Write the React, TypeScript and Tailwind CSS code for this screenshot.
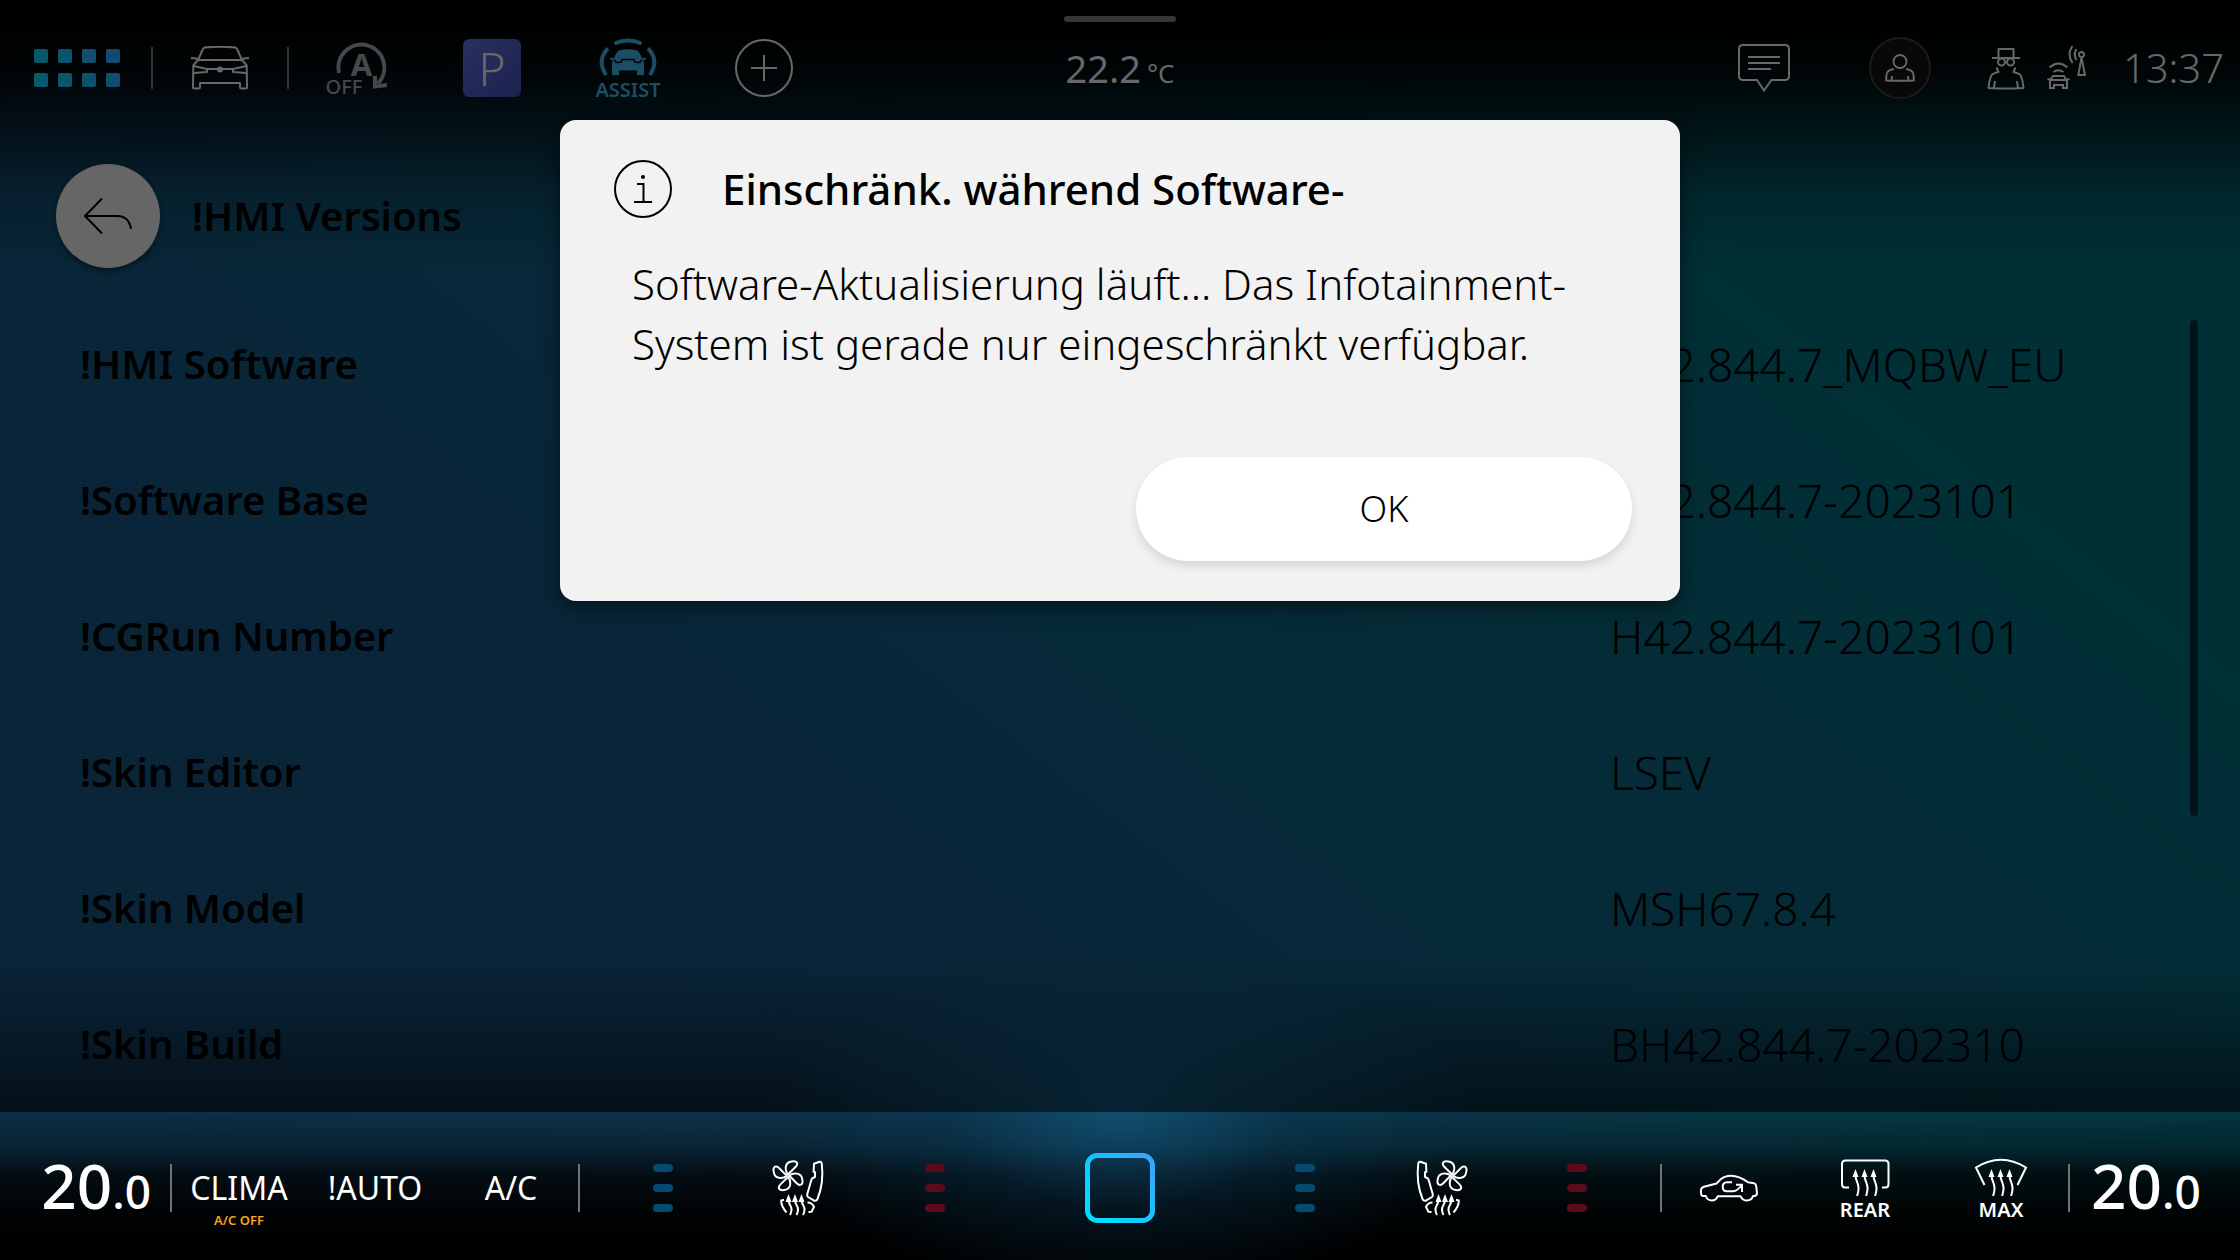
import type { ReactNode } from 'react';

const versions: [string, string][] = [
  ['!HMI Software', 'H42.844.7_MQBW_EU'],
  ['!Software Base', 'H42.844.7-2023101'],
  ['!CGRun Number', 'H42.844.7-2023101'],
  ['!Skin Editor', 'LSEV'],
  ['!Skin Model', 'MSH67.8.4'],
  ['!Skin Build', 'BH42.844.7-202310'],
];

const cell = 'flex w-[136px] items-center justify-center';
const line = { fill: 'none', stroke: 'currentColor', strokeWidth: 2 } as const;

function AppsIcon() {
  return (
    <svg width="86" height="38" viewBox="0 0 86 38" aria-hidden="true">
      <defs>
        <linearGradient id="apps" x1="0" y1="38" x2="86" y2="0" gradientUnits="userSpaceOnUse">
          <stop offset="0" stopColor="#035c6b" />
          <stop offset="1" stopColor="#15486f" />
        </linearGradient>
      </defs>
      {[0, 24, 48, 72].map((x) =>
        [0, 24].map((y) => <rect key={`${x}-${y}`} x={x} y={y} width="14" height="14" rx="2" fill="url(#apps)" />),
      )}
    </svg>
  );
}

function CarFrontIcon() {
  return (
    <svg width="60" height="44" viewBox="0 0 60 44" aria-hidden="true" {...line} strokeLinejoin="round">
      <path d="M8 14 L13 3 Q13.700 1.600 15 1.400 Q30 0 45 1.400 Q46.300 1.600 47 3 L52 14 H8 L6.500 12.500 L1 12 M52 14 L53.500 12.500 L59 12" />
      <path d="M8 14 L3.300 19.500 L3 41 Q3 42.500 4.500 42.500 H8.500 Q10 42.500 10 41 V37 H50 V41 Q50 42.500 51.500 42.500 H55.500 Q57 42.500 57 41 L56.700 19.500 L52 14" />
      <path d="M3.500 20 L17 23 V26 L4 27 M56.500 20 L43 23 V26 L56 27 M17 23 H43" />
      <circle cx="30" cy="23.500" r="3" fill="currentColor" stroke="none" />
    </svg>
  );
}

function AutoStopIcon() {
  return (
    <svg width="64" height="68" viewBox="0 -6 64 68" aria-hidden="true" fill="none">
      <path d="M15 33 A23 23 0 1 1 54 43.500" stroke="currentColor" strokeWidth="4" />
      <path d="M51 36 V46.500 L63 45" stroke="currentColor" strokeWidth="4" />
      <text x="37.500" y="36" fontSize="31" fontWeight="700" fill="currentColor" textAnchor="middle">A</text>
      <text x="20" y="54" fontSize="20" fontWeight="500" fill="currentColor" textAnchor="middle">OFF</text>
    </svg>
  );
}

function AssistIcon() {
  return (
    <svg width="68" height="74" viewBox="-2 -6 68 74" aria-hidden="true" fill="none">
      <g stroke="currentColor" strokeWidth="4">
        <path d="M18.500 6.500 Q32 0.500 45.500 6.500" />
        <path d="M12 11.500 Q0.500 23 10 38" />
        <path d="M52 11.500 Q63.500 23 54 38" />
      </g>
      <path
        fill="currentColor"
        d="M24 13 Q32 11.500 40 13 Q42 13.300 43 15 L46 21 L50 20.800 V22.500 L47 23 L48 25.500 V38 H41 V33.500 H23 V38 H16 V25.500 L17 23 L14 22.500 V20.800 L18 21 L21 15 Q22 13.300 24 13 Z"
      />
      <path d="M18.500 22.500 L20 25.500 L25 25 L26 22.500 H38 L39 25 L44 25.500 L45.500 22.500" stroke="#010405" strokeWidth="1.500" />
      <text x="32" y="60" fontSize="20" fontWeight="600" fill="currentColor" textAnchor="middle">ASSIST</text>
    </svg>
  );
}

function PlusIcon() {
  return (
    <svg width="58" height="58" viewBox="0 0 58 58" aria-hidden="true" {...line}>
      <circle cx="29" cy="29" r="28" />
      <path d="M29 16 V42 M16 29 H42" />
    </svg>
  );
}

function MessageIcon() {
  return (
    <svg width="52" height="48" viewBox="1 0 52 48" aria-hidden="true" {...line}>
      <path d="M5 1 H48 Q52 1 52 5 V32 Q52 36 48 36 H34.500 L27 46.500 L20 36 H6 Q2 36 2 32 V5 Q2 1 6 1 Z" />
      <path d="M11 13 H43 M11 19 H43 M11 25 H34" />
    </svg>
  );
}

function UserIcon() {
  return (
    <svg width="30" height="28" viewBox="0 0 30 28" aria-hidden="true" {...line} strokeLinejoin="round">
      <circle cx="15" cy="7.500" r="6.500" />
      <path d="M9 15 Q3 16 2 19 Q1.200 21 1.200 26.500 Q15 27.200 28.800 26.500 Q28.800 21 28 19 Q27 16 21 15 M7 22 L6.500 26.500 M23 22 L23.500 26.500" />
    </svg>
  );
}

function PrivacyIcon() {
  return (
    <svg width="38" height="44" viewBox="0 0 38 44" aria-hidden="true" {...line} strokeLinejoin="round">
      <path d="M5 12 H33 M11.500 12 V3 H26.500 V12" />
      <circle cx="14.500" cy="16" r="3.500" />
      <circle cx="23.500" cy="16" r="3.500" />
      <path d="M9.500 21.500 L11.500 26 Q5 27.500 4 30 Q2 35 1.500 42 Q19 43 36.500 42 Q36 35 34 30 Q33 27.500 26.500 26 L28.500 21.500 M8 35 L7 42 M30 35 L31 42" />
    </svg>
  );
}

function AntennaCarIcon() {
  return (
    <svg width="40" height="46" viewBox="0 0 40 46" aria-hidden="true" {...line}>
      <path d="M3 43 V36 L6 31 H17 L20 36 V43 H16 V40 H7 V43 Z M4 35 H19 M0.500 34 L4 35 M22.500 34 L19 35" />
      <path d="M6.500 27 Q11.500 23.500 16.500 27 M2.500 22.500 Q11.500 14.500 20.500 22.500" />
      <circle cx="34.500" cy="9.500" r="2.500" />
      <path d="M34.500 12.500 L31.300 30 H38 Z M29.500 4 Q26 9.500 29.500 15 M25.500 1 Q19.500 9 25.500 18" />
    </svg>
  );
}

function BackIcon() {
  return (
    <svg width="50" height="38" viewBox="0 0 50 38" aria-hidden="true" {...line}>
      <path d="M19 1.500 L2 19 L19 36.500 M2 19 H34 Q46 19 48 32" />
    </svg>
  );
}

function InfoIcon() {
  return (
    <svg width="58" height="58" viewBox="0 0 58 58" aria-hidden="true" {...line}>
      <circle cx="29" cy="29" r="28" />
      <path d="M23 24 H29.500 V42 M20 42 H38" />
      <circle cx="29" cy="17" r="2" fill="currentColor" stroke="none" />
    </svg>
  );
}

function HeatArrow({ x, top, bottom }: { x: number; top: number; bottom: number }) {
  const h = (bottom - top - 6) / 3;
  return (
    <>
      <path
        d={`M${x} ${top + 5} C${x} ${top + 5 + h} ${x + 3.5} ${top + 6 + h} ${x + 3} ${top + 6 + 2 * h} Q${x + 2.5} ${bottom - 2} ${x + 1.5} ${bottom}`}
      />
      <path d={`M${x} ${top - 1} L${x + 3} ${top + 7} H${x - 3} Z`} fill="currentColor" stroke="none" />
    </>
  );
}

function SeatIcon({ mirrored = false }: { mirrored?: boolean }) {
  return (
    <svg width="56" height="58" viewBox="0 0 56 58" aria-hidden="true" {...line} strokeLinejoin="round">
      <g transform={mirrored ? 'matrix(-1 0 0 1 56 0)' : undefined}>
        {[0, 90, 180, 270].map((a) => (
          <path
            key={a}
            transform={`rotate(${a} 17 16.700)`}
            d="M16.800 15.500 C14 12 13.500 5 18.500 3 C22 1.800 25 2 26 3.800 C26.800 5.500 26 6.500 24.500 8 Z"
          />
        ))}
        <path d="M42.600 12.700 L43 4.700 L48.500 2.700 Q50.500 2.500 50.800 5 Q53 24 46.500 40 Q45.500 42.200 43.500 41.800 L37 38 Q35.800 37 36.300 35 L40.500 20.500 Q41 19 44 18 V13.200 Z" />
        <path d="M13 40.800 L10.200 41.500 Q10 47 15.500 53.500 M36.500 43.500 Q41 43.500 43 47.700 L40.500 52.700 L37.500 53" />
        <HeatArrow x={17.5} top={36} bottom={56} />
        <HeatArrow x={24} top={36} bottom={56} />
        <HeatArrow x={30.5} top={36} bottom={56} />
      </g>
    </svg>
  );
}

function HomeIcon() {
  return (
    <svg width="70" height="70" viewBox="0 0 70 70" aria-hidden="true" fill="none">
      <defs>
        <linearGradient id="home" x1="0" y1="70" x2="70" y2="0" gradientUnits="userSpaceOnUse">
          <stop offset="0.200" stopColor="#00dcff" />
          <stop offset="0.850" stopColor="#32a8ff" />
        </linearGradient>
      </defs>
      <rect x="2.500" y="2.500" width="65" height="65" rx="10" stroke="url(#home)" strokeWidth="5" />
    </svg>
  );
}

function RecirculationIcon() {
  return (
    <svg width="60" height="58" viewBox="0 0 60 58" aria-hidden="true" {...line} strokeLinejoin="round">
      <path d="M6.800 37 H4 Q2.200 37 2 34 V31 Q2.200 28.500 5 27.700 L17.500 24.500 L22 20 Q26 16.700 32 16.700 Q40 16.700 49 23.300 L55 24.300 Q56.800 24.700 57.200 27 L58 34 Q58 36.500 55.500 37 H54 Q52.500 41.500 48 41.500 Q43.500 41.500 41.600 37.300 H18.700 Q17 41.500 12.700 41.500 Q8.500 41.500 6.800 37 Z" />
      <path d="M33 23.300 H28 Q23.700 23.500 23.700 28 Q23.700 32.300 28 32.300 H34 Q38 32.300 43 26 M37 25.800 H43 V33" strokeLinejoin="miter" />
    </svg>
  );
}

function RearDefrostIcon() {
  return (
    <svg width="60" height="38" viewBox="0 0 60 38" aria-hidden="true" {...line}>
      <path d="M14 29.500 H10 Q7 29.500 7 26 V6 Q7 2.500 10.500 2.500 H50 Q53.500 2.500 53.500 6 V26 Q53.500 29.500 50.500 29.500 H47" />
      <HeatArrow x={20.5} top={12} bottom={38} />
      <HeatArrow x={29.5} top={12} bottom={38} />
      <HeatArrow x={38.5} top={12} bottom={38} />
    </svg>
  );
}

function FrontDefrostIcon() {
  return (
    <svg width="60" height="38" viewBox="0 0 60 38" aria-hidden="true" {...line}>
      <path d="M13.500 27 L5 9.500 Q30 -6 55 9.500 L46.500 27" />
      <HeatArrow x={20.5} top={12} bottom={38} />
      <HeatArrow x={29.5} top={12} bottom={38} />
      <HeatArrow x={38.5} top={12} bottom={38} />
    </svg>
  );
}

function Level({ tone, label }: { tone: 'cold' | 'hot'; label: string }) {
  const bar = tone === 'cold' ? 'h-2 w-5 rounded-full bg-[#054a70]' : 'h-2 w-5 rounded-full bg-[#5c0a1c]';
  return (
    <button type="button" aria-label={label} className={`${cell} flex-col gap-3`}>
      <span className={bar} />
      <span className={bar} />
      <span className={bar} />
    </button>
  );
}

function Divider({ className }: { className: string }) {
  return <span className={`-mx-px w-0.5 shrink-0 ${className}`} />;
}

function ClimaButton({ children, note }: { children: ReactNode; note?: string }) {
  return (
    <button type="button" className="grid w-[136px] grid-rows-[1fr_40px_1fr] items-center justify-items-center text-[32px] leading-10">
      <span className="row-start-2">{children}</span>
      {note && <span className="row-start-3 self-start pt-0.5 text-[13px] leading-5 font-semibold text-[#f9a51a]">{note}</span>}
    </button>
  );
}

function DefrostButton({ children, text }: { children: ReactNode; text: string }) {
  return (
    <button type="button" className={`${cell} flex-col gap-0.5 pt-1 text-xl leading-6 font-semibold`}>
      {children}
      {text}
    </button>
  );
}

function Temperature({ label, className }: { label: string; className: string }) {
  return (
    <button type="button" aria-label={label} className={`flex w-[171px] items-center font-medium ${className}`}>
      <span className="text-[62px] leading-[80px]">
        20<span className="text-[46px]">.0</span>
      </span>
    </button>
  );
}

function StatusBar() {
  return (
    <header className="grid h-[136px] shrink-0 grid-cols-[1fr_auto_1fr] text-[#686868]">
      <nav className="flex items-center">
        <button type="button" aria-label="Apps" className="flex w-[152px] justify-center pl-0.5"><AppsIcon /></button>
        <Divider className="h-[42px] bg-[#303436]" />
        <button type="button" aria-label="Fahrzeug" className={cell}><CarFrontIcon /></button>
        <Divider className="h-[42px] bg-[#303436]" />
        <button type="button" aria-label="Start-Stopp aus" className={`${cell} text-[#45494b]`}><AutoStopIcon /></button>
        <button type="button" className={cell}>
          <span className="flex size-[58px] items-center justify-center rounded-md bg-linear-to-br from-[#29305f] to-[#1c2250] text-[46px] leading-none font-light">P</span>
        </button>
        <button type="button" aria-label="Assist" className={`${cell} text-[#1c4d66]`}><AssistIcon /></button>
        <button type="button" aria-label="Hinzufügen" className={cell}><PlusIcon /></button>
      </nav>
      <div className="grid grid-rows-[1fr_auto_1fr] justify-items-center pt-4 pb-3">
        <span className="h-1.5 w-28 rounded-full bg-[#343636]" />
        <p className="flex items-baseline gap-1.5 text-[38px] leading-[48px]">
          <span>22.2</span>
          <span className="text-[26px]">°C</span>
        </p>
      </div>
      <div className="flex items-center justify-end">
        <button type="button" aria-label="Nachrichten" className={cell}><MessageIcon /></button>
        <button type="button" aria-label="Profil" className={cell}>
          <span className="flex size-[62px] items-center justify-center rounded-full border-2 border-[#1b1919] bg-[#080808]"><UserIcon /></span>
        </button>
        <div className="flex w-[272px] items-center gap-[22px] pr-4 pl-[19px]">
          <PrivacyIcon />
          <AntennaCarIcon />
          <time className="ml-auto text-[40px] leading-[48px] font-light">13:37</time>
        </div>
      </div>
    </header>
  );
}

function ClimateBar() {
  return (
    <footer className="flex h-[148px] shrink-0 items-stretch bg-[radial-gradient(ellipse_340px_190px_at_50%_0,rgba(22,96,138,0.6),rgba(12,60,90,0.3)_50%,transparent),linear-gradient(180deg,transparent,rgba(0,0,0,0.28)_24%,rgba(0,0,0,0.72)_42%,rgba(0,0,0,0.9)_62%,black_88%),linear-gradient(90deg,#0c3046,#0d3148_30%,#0a3448_55%,#03373f)] pt-1 text-white">
      <Temperature label="Temperatur links" className="justify-end pr-5" />
      <Divider className="h-12 self-center bg-[#6f7375]" />
      <ClimaButton note="A/C OFF">CLIMA</ClimaButton>
      <ClimaButton>!AUTO</ClimaButton>
      <ClimaButton>A/C</ClimaButton>
      <Divider className="h-12 self-center bg-[#6f7375]" />
      <div className="ml-4 flex">
        <Level tone="cold" label="Sitzlüftung links" />
        <button type="button" aria-label="Sitz links" className={cell}><SeatIcon /></button>
        <Level tone="hot" label="Sitzheizung links" />
      </div>
      <button type="button" aria-label="Home" className="flex flex-1 items-center justify-center"><HomeIcon /></button>
      <div className="mr-4 flex">
        <Level tone="cold" label="Sitzlüftung rechts" />
        <button type="button" aria-label="Sitz rechts" className={cell}><SeatIcon mirrored /></button>
        <Level tone="hot" label="Sitzheizung rechts" />
      </div>
      <Divider className="h-12 self-center bg-[#6f7375]" />
      <button type="button" aria-label="Umluft" className={cell}><RecirculationIcon /></button>
      <DefrostButton text="REAR"><RearDefrostIcon /></DefrostButton>
      <DefrostButton text="MAX"><FrontDefrostIcon /></DefrostButton>
      <Divider className="h-12 self-center bg-[#6f7375]" />
      <Temperature label="Temperatur rechts" className="justify-start pl-[22px]" />
    </footer>
  );
}

export default function App() {
  return (
    <div className="relative flex h-screen flex-col overflow-hidden bg-black font-['Noto_Sans','Open_Sans',sans-serif]">
      <div className="flex min-h-0 flex-1 flex-col bg-[radial-gradient(ellipse_360px_150px_at_50%_100%,rgba(14,66,92,0.35),transparent),linear-gradient(180deg,black_20px,rgba(0,0,0,0.88)_75px,rgba(0,0,0,0.6)_125px,rgba(0,0,0,0.2)_195px,transparent_270px,transparent_960px,rgba(0,0,0,0.55)_100%),linear-gradient(38deg,#0a2438_22%,#062a38_50%,#003036_78%)]">
        <StatusBar />
        <div className="flex h-40 shrink-0 items-center gap-8 pl-14">
          <button type="button" aria-label="Zurück" className="flex size-[104px] items-center justify-center rounded-full bg-[#666] text-black shadow-md shadow-black/40"><BackIcon /></button>
          <h1 className="text-[40px] leading-[56px] font-semibold text-black">!HMI Versions</h1>
        </div>
        <main className="flex min-h-0 flex-1 items-start overflow-hidden pr-[42px] pl-20">
          <table className="flex-1 text-left text-black">
            <tbody>
              {versions.map(([name, value]) => (
                <tr key={name} className="h-[136px]">
                  <th scope="row" className="p-0 text-[40px] leading-[56px] font-semibold">{name}</th>
                  <td className="w-[580px] p-0 text-[46px] leading-[56px] font-light">{value}</td>
                </tr>
              ))}
            </tbody>
          </table>
          <div className="mt-6 h-[496px] w-2 rounded-full bg-[#00151a]" />
        </main>
      </div>
      <ClimateBar />
      <div className="absolute inset-0 flex items-start justify-center pt-[120px]">
        <section
          role="alertdialog"
          aria-labelledby="dialog-title"
          aria-describedby="dialog-text"
          className="flex w-1/2 flex-col rounded-2xl bg-[#f2f2f2] pt-10 pr-12 pb-10 text-black shadow-[0_6px_20px_rgba(0,0,0,0.5)]"
        >
          <div className="flex items-center gap-[50px] pl-[54px]">
            <InfoIcon />
            <h2 id="dialog-title" className="text-[42px] leading-[56px] font-medium">Einschränk. während Software-</h2>
          </div>
          <p id="dialog-text" className="pt-9 pl-[72px] text-[42px] leading-[60px] font-light">
            Software-Aktualisierung läuft... Das Infotainment-System ist gerade nur eingeschränkt verfügbar.
          </p>
          <button type="button" className="mt-[83px] h-[104px] w-[496px] self-end rounded-full bg-white text-4xl font-light shadow-[0_5px_10px_rgba(0,0,0,0.12)]">OK</button>
        </section>
      </div>
    </div>
  );
}
